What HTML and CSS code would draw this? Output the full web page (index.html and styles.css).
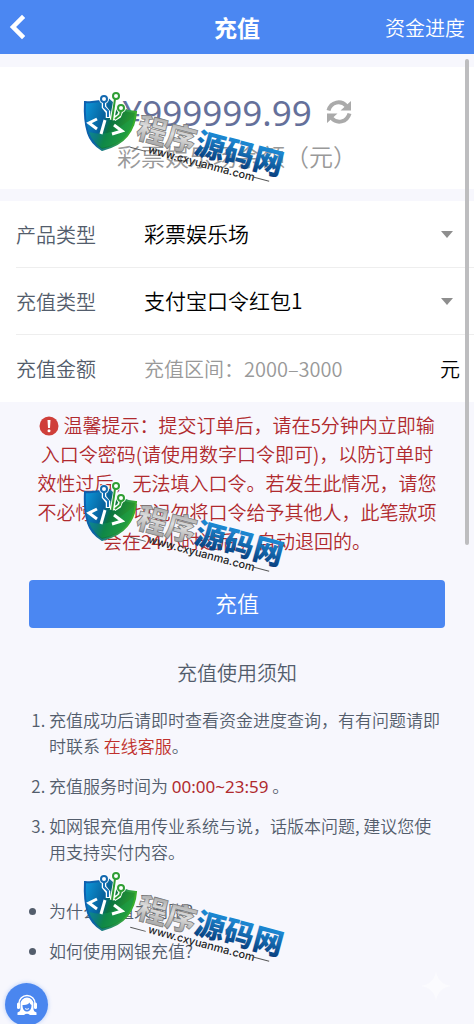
FILE: index.html
```html
<!DOCTYPE html>
<html lang="zh-CN">
<head>
  <meta charset="utf-8">
  <meta name="viewport" content="width=device-width, initial-scale=1">
  <title>充值</title>
  <link rel="stylesheet" href="styles.css">
</head>
<body>
  <header class="header">
    <button class="back-btn" type="button" aria-label="返回">
      <svg width="16" height="26" viewBox="0 0 16 26"><path d="M13 4 4 13l9 9" fill="none" stroke="#fff" stroke-width="4.500" stroke-linecap="square"/></svg>
    </button>
    <h1>充值</h1>
    <a class="header-link" href="#progress">资金进度</a>
  </header>

  <main>
    <section class="balance">
      <div class="balance-row">
        <span class="balance-amount">¥999999.99</span>
        <button class="refresh-btn" type="button" aria-label="刷新">
          <svg width="26" height="26" viewBox="0 0 26 26">
            <path d="M2.500 11.500C5 2.500 15 1 20.500 7M23.500 14.500C21 23.500 11 25 5.500 19" fill="none" stroke="#aaa" stroke-width="4"/>
            <path d="M25 2v9.500H14.500zM1 24v-9.500H11.500z" fill="#aaa"/>
          </svg>
        </button>
      </div>
      <div class="balance-label">彩票娱乐场余额（元）</div>
    </section>

    <form class="form" id="recharge-form">
      <div class="form-row">
        <label for="product">产品类型</label>
        <div class="select-wrap">
          <select id="product">
            <option>彩票娱乐场</option>
          </select>
        </div>
      </div>
      <div class="form-row">
        <label for="pay-type">充值类型</label>
        <div class="select-wrap">
          <select id="pay-type">
            <option>支付宝口令红包1</option>
          </select>
        </div>
      </div>
      <div class="form-row">
        <label for="amount">充值金额</label>
        <input type="text" id="amount" inputmode="numeric" placeholder="充值区间：2000–3000">
        <span class="unit">元</span>
      </div>
    </form>

    <p class="tips">
      <svg class="tips-icon" width="20" height="20" viewBox="0 0 20 20"><circle cx="10" cy="10" r="9.500" fill="#cf3f3a"/><path d="M8.500 4h3l-.5 8H9z" fill="#fff"/><circle cx="10" cy="14.800" r="1.500" fill="#fff"/></svg>
      温馨提示：提交订单后，请在5分钟内立即输入口令密码(请使用数字口令即可)，以防订单时效性过后，无法填入口令。若发生此情况，请您不必惊慌，切记勿将口令给予其他人，此笔款项会在24小时过后，自动退回的。
    </p>

    <button class="submit-btn" type="submit" form="recharge-form">充值</button>

    <section class="notes">
      <h2>充值使用须知</h2>
      <ol>
        <li>充值成功后请即时查看资金进度查询，有有问题请即时联系 <a href="#service">在线客服</a>。</li>
        <li>充值服务时间为 <span class="time">00:00~23:59</span> 。</li>
        <li>如网银充值用传业系统与说，话版本问题, 建议您使用支持实付内容。</li>
      </ol>
      <ul>
        <li>为什么充值未到账?</li>
        <li>如何使用网银充值?</li>
      </ul>
    </section>
  </main>

  <button class="service-btn" type="button" aria-label="在线客服">
    <svg width="24" height="24" viewBox="0 0 24 24">
      <path d="M4 13V10.500a8 8 0 0 1 16 0V13" fill="none" stroke="#fff" stroke-width="1.500"/>
      <path d="M5.500 11a6.500 6.500 0 0 1 13 0v5.500q0 2 3 3V22H2.500v-2.500q3-1 3-3z" fill="#fff"/>
      <rect x="2" y="9.500" width="3" height="6.500" rx="1.500" fill="#fff"/>
      <rect x="19" y="9.500" width="3" height="6.500" rx="1.500" fill="#fff"/>
      <path d="M7.500 12c4 .5 6-1 7-2.500.5 1.500 1.200 2 2 2.500 0 4-1.500 6.500-4.500 6.500S7.500 16 7.500 12z" fill="#4a86ef"/>
      <path d="M10 15.500c1.200 1 2.800 1 4 0" fill="none" stroke="#fff"/>
      <path d="M9 22q3-2.500 6 0z" fill="#4a86ef"/>
    </svg>
  </button>

  <svg class="sparkle" width="30" height="30" viewBox="0 0 30 30" aria-hidden="true"><path d="M15 0q2 13 15 15-13 2-15 15Q13 17 0 15 13 13 15 0z" fill="#fbfbfe"/></svg>

  <div class="scrollbar"></div>

  <!-- site logo stamped over the page -->
  <svg class="defs" width="0" height="0" aria-hidden="true">
    <defs>
      <linearGradient id="shield-fill" x1="0" y1="0" x2="1" y2="0.400">
        <stop offset="0" stop-color="#0d9be0"/>
        <stop offset="0.450" stop-color="#07609a"/>
        <stop offset="0.600" stop-color="#0a7440"/>
        <stop offset="1" stop-color="#2f9e2c"/>
      </linearGradient>
      <linearGradient id="shield-edge" x1="0" y1="0" x2="1" y2="0.300">
        <stop offset="0" stop-color="#0d5fb0"/>
        <stop offset="0.400" stop-color="#0c64a8"/>
        <stop offset="1" stop-color="#3aae2c"/>
      </linearGradient>
      <linearGradient id="silver" x1="0" y1="0" x2="0" y2="1">
        <stop offset="0.200" stop-color="#a8a8a8"/>
        <stop offset="0.500" stop-color="#dedede"/>
        <stop offset="0.900" stop-color="#a0a0a0"/>
      </linearGradient>
      <linearGradient id="blue" x1="0" y1="0" x2="0" y2="1">
        <stop offset="0.300" stop-color="#1b86d0"/>
        <stop offset="0.900" stop-color="#073a78"/>
      </linearGradient>
      <symbol id="logo" viewBox="0 0 204 98" overflow="visible">
        <path d="M1 11Q13 12 24 8q11 12 28 13-1 14-9 24-8 10-25 14Q7 52 4 42 0 29 1 11z" fill="url(#shield-fill)" stroke="url(#shield-edge)" stroke-width="2"/>
        <path d="M5 41q14 4 24-1t21-15q-1 11-7 19-8 9-25 13Q8 51 5 41z" fill="#17a556" opacity="0.400"/>
        <path d="M20 12v4l4 5v6M32 7l-4 22M37 20l-2 5-5 3" fill="none" stroke="#fff" stroke-width="4.500"/>
        <circle cx="20" cy="8" r="5" fill="#fff"/>
        <circle cx="32" cy="5" r="5" fill="#fff"/>
        <circle cx="37" cy="17" r="5" fill="#fff"/>
        <path d="M20 11v5l4 4v6" fill="none" stroke="#1772b8" stroke-width="2"/>
        <path d="M31 8l-3 21M37 20l-1 4-5 4" fill="none" stroke="#2f9e35" stroke-width="2"/>
        <circle cx="20" cy="8" r="3" fill="#fff" stroke="#1469b0" stroke-width="2"/>
        <circle cx="32" cy="5" r="3" fill="#fff" stroke="#2f9e35" stroke-width="2"/>
        <circle cx="37" cy="17" r="3" fill="#fff" stroke="#2f9e35" stroke-width="2"/>
        <path d="M13 28l-8 4 8 6M21 29l-4 14M30 34l8 6-10 3" fill="none" stroke="#fff" stroke-width="3"/>
        <g transform="rotate(15 50 50)">
          <text class="logo-name" x="50" y="46"><tspan fill="url(#silver)" stroke="#777" stroke-width="0.700">程序</tspan><tspan fill="url(#blue)">源码网</tspan></text>
          <text class="logo-url" x="66" y="58">www.cxyuanma.com</text>
          <path d="M48 57h16M174 54h17" stroke="#555"/>
        </g>
      </symbol>
    </defs>
  </svg>
  <div class="watermarks">
    <svg><use href="#logo"/></svg>
    <svg><use href="#logo"/></svg>
    <svg><use href="#logo"/></svg>
  </div>
</body>
</html>
```

FILE: styles.css
```css
* {
  box-sizing: border-box;
}

body {
  position: relative;
  min-height: 100vh;
  margin: 0;
  background: #f7f7fd;
  color: #535d6c;
  font-family: "Noto Sans CJK SC", sans-serif;
  font-weight: 350;
  overflow-x: hidden;
}

button,
input,
select {
  font: inherit;
}

.header {
  display: grid;
  grid-template-columns: 1fr auto 1fr;
  align-items: center;
  height: 54px;
  padding: 0 9px;
  background: #4b87f2;
  color: #fff;
}

.header h1 {
  margin: 0;
  font-size: 23px;
  font-weight: 700;
}

.back-btn {
  display: flex;
  justify-self: start;
  padding: 0;
  border: none;
  background: none;
  cursor: pointer;
}

.header-link {
  justify-self: end;
  color: #fff;
  font-size: 20px;
  text-decoration: none;
}

.balance {
  margin-top: 13px;
  padding: 19px 0 15px;
  background: #fff;
  text-align: center;
}

.balance-row {
  display: flex;
  justify-content: center;
  align-items: center;
  gap: 14px;
  height: 52px;
}

.balance-amount {
  color: #65709a;
  font-family: "Noto Sans", sans-serif;
  font-size: 35px;
  font-weight: 400;
}

.refresh-btn {
  display: flex;
  padding: 0;
  border: none;
  background: none;
  cursor: pointer;
}

.balance-label {
  color: #999;
  font-size: 24px;
  line-height: 36px;
}

.form {
  margin-top: 12px;
  padding-left: 16px;
  background: #fff;
}

.form-row {
  display: grid;
  grid-template-columns: 128px 1fr auto;
  align-items: center;
  height: 67px;
  padding-right: 14px;
  border-bottom: 1px solid #eee;
}

.form-row:last-child {
  border-bottom: none;
}

.form-row label {
  font-size: 20px;
}

.select-wrap {
  display: flex;
  grid-column: 2 / 4;
  align-items: center;
}

.select-wrap::after {
  content: "";
  margin-right: 7px;
  border: 6px solid transparent;
  border-top: 7px solid #8e8e8e;
  border-bottom: none;
}

.form-row select {
  flex: 1;
  padding: 0 0 2px;
  border: none;
  background: none;
  color: #000;
  font-size: 21px;
  appearance: none;
}

.form-row input {
  width: 100%;
  padding: 0;
  border: none;
  background: none;
  font-size: 20px;
  outline: none;
}

.form-row input::placeholder {
  color: #999;
}

.unit {
  color: #000;
  font-size: 20px;
}

.tips {
  margin: 8px 32px 0;
  color: #b02a2e;
  font-size: 19px;
  line-height: 29px;
  text-align: center;
}

.tips-icon {
  vertical-align: -3px;
}

.submit-btn {
  display: block;
  width: calc(100% - 58px);
  height: 48px;
  margin: 25px 29px 0;
  padding: 0 0 4px;
  border: none;
  border-radius: 4px;
  background: #4b87f2;
  color: #fff;
  font-size: 22px;
  cursor: pointer;
}

.notes {
  padding: 30px 32px 40px;
  font-size: 17px;
  line-height: 26px;
}

.notes h2 {
  margin: 0 0 19px;
  font-size: 20px;
  font-weight: 350;
  line-height: 30px;
  text-align: center;
}

.notes ol,
.notes ul {
  margin: 0;
  padding-left: 17px;
}

.notes ul {
  margin-top: 33px;
}

.notes li + li {
  margin-top: 14px;
}

.notes a {
  color: #c0302c;
  text-decoration: none;
}

.time {
  color: #b02a2e;
  font-family: "Noto Sans", sans-serif;
  font-weight: 400;
  line-height: 1;
}

.service-btn {
  position: fixed;
  left: 5px;
  bottom: -2px;
  display: flex;
  justify-content: center;
  align-items: center;
  width: 43px;
  height: 43px;
  padding: 0;
  border: none;
  border-radius: 50%;
  background: #4a86ef;
  box-shadow: 0 0 4px rgba(74, 134, 239, 0.4);
  cursor: pointer;
}

.sparkle {
  position: fixed;
  right: 23px;
  bottom: 23px;
}

.scrollbar {
  position: fixed;
  top: 59px;
  right: 5px;
  width: 4px;
  height: 486px;
  border-radius: 2px;
  background: #bdbdbf;
}

.defs {
  position: absolute;
}

.watermarks {
  position: absolute;
  top: 91px;
  left: 84px;
  display: grid;
  gap: 292px;
  pointer-events: none;
}

.watermarks svg {
  width: 204px;
  height: 98px;
  overflow: visible;
}

.logo-name {
  font-size: 30px;
  font-weight: 900;
}

.logo-url {
  fill: #222;
  font-family: Inter, sans-serif;
  font-size: 11px;
  font-weight: 500;
}
```
